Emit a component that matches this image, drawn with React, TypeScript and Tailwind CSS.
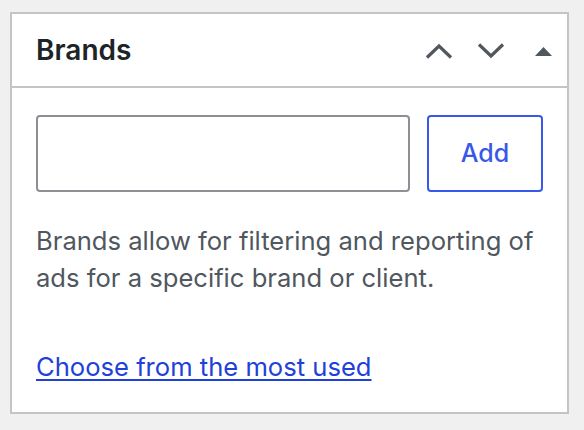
import * as React from "react";

export default function App() {
  return (
    <div className="min-h-[430px] w-[584px] bg-[#f0f0f1] pt-[12px] pl-[10px] font-['Inter',sans-serif]">
      <div className="w-[559px] h-[402px] border-2 border-[#c3c4c7] bg-white flex flex-col">
        {/* header */}
        <div className="h-[74px] border-b-2 border-[#c3c4c7] flex items-center pl-[24px] pr-[6px]">
          <h2 className="flex-1 text-[28px] font-semibold text-[#1d2327] leading-none">Brands</h2>
          <div className="flex items-center text-[#50575e]">
            <button className="w-[36px] h-[36px] flex items-center justify-center mt-[2px]">
              <svg width="28" height="16" viewBox="0 0 28 16" fill="none">
                <path d="M2 14.5 L14 3 L26 14.5" stroke="currentColor" strokeWidth="3.2" />
              </svg>
            </button>
            <button className="w-[36px] h-[36px] flex items-center justify-center ml-[16px] mt-[2px]">
              <svg width="28" height="16" viewBox="0 0 28 16" fill="none">
                <path d="M2 1.5 L14 13 L26 1.5" stroke="currentColor" strokeWidth="3.2" />
              </svg>
            </button>
            <button className="w-[36px] h-[36px] flex items-center justify-center ml-[16px] mt-[2px]">
              <svg width="17" height="9" viewBox="0 0 17 9">
                <path d="M0 9 L8.5 0 L17 9 Z" fill="currentColor" />
              </svg>
            </button>
          </div>
        </div>

        {/* body */}
        <div className="flex-1 pt-[27px] px-[24px]">
          <div className="flex gap-[17px]">
            <input
              type="text"
              className="w-[374px] h-[77px] border-2 border-[#8c8f94] rounded-[4px] px-3 text-[24px] outline-none"
            />
            <button className="w-[116px] h-[77px] border-2 border-[#3858e9] rounded-[4px] text-[25px] font-medium text-[#3858e9]">
              Add
            </button>
          </div>
          <p className="mt-[30px] text-[25.6px] leading-[37px] text-[#50575e]">
            Brands allow for filtering and reporting of ads for a specific brand or client.
          </p>
          <a href="#" className="block mt-[52px] text-[25.6px] leading-[38px] text-[#213fd9] underline underline-offset-[3px]">
            Choose from the most used
          </a>
        </div>
      </div>
    </div>
  );
}
